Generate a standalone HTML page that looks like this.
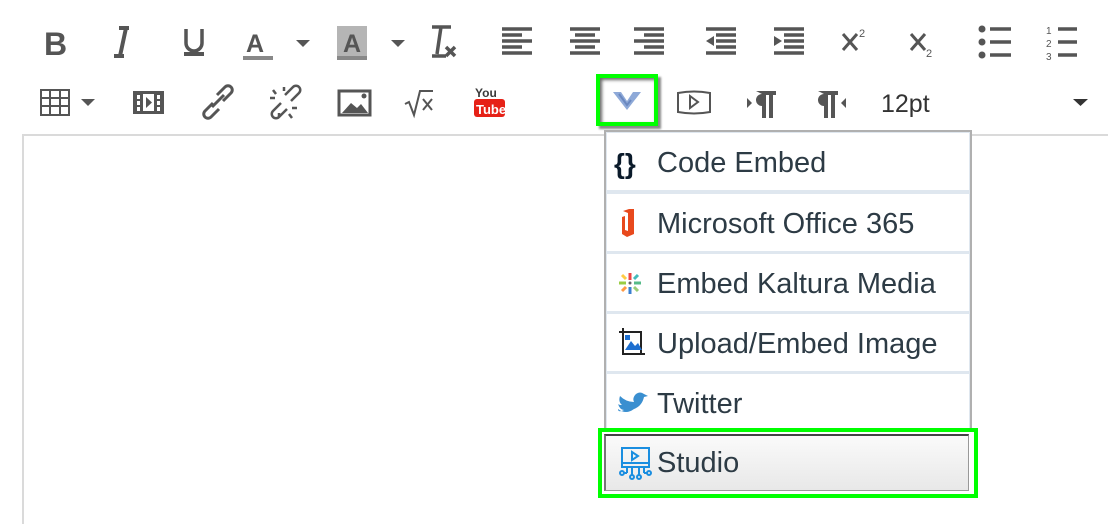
<!DOCTYPE html>
<html><head><meta charset="utf-8"><style>
body{margin:0;width:1108px;height:524px;background:#fff;position:relative;overflow:hidden;font-family:"Liberation Sans",sans-serif}
.a{position:absolute}
svg.a{overflow:visible}
.item{position:absolute;left:607px;width:362px;height:57px;background:#fff;font-size:29px;color:#2d3b45;line-height:57px}
.item span{position:absolute;left:50px;top:2px}
</style></head><body>
<div class="a" style="left:22px;top:134px;width:1086px;height:2px;background:#dadada"></div>
<div class="a" style="left:22px;top:134px;width:2px;height:390px;background:#dadada"></div>

<svg class="a" style="left:0;top:0" width="1108" height="130" fill="#555" stroke="none">
<text x="44" y="55" font-size="32" font-weight="bold" font-family="Liberation Sans">B</text>
<path d="M119 28h10M114 56h10M126 28l-6 28" stroke="#555" stroke-width="4" fill="none"/>
<path d="M186 29v14a8 8 0 0 0 16 0v-14" stroke="#555" stroke-width="3.5" fill="none"/><rect x="184" y="52" width="20" height="4"/>
<text x="246" y="52" font-size="25" font-weight="bold" font-family="Liberation Sans">A</text><rect x="243" y="56" width="30" height="4" fill="#888"/>
<path d="M296 40h14l-7 7z"/>
<rect x="337" y="26" width="30" height="30" fill="#b5b5b5"/><text x="343" y="52" font-size="25" font-weight="bold" font-family="Liberation Sans">A</text><rect x="337" y="56" width="30" height="4" fill="#888"/>
<path d="M391 40h14l-7 7z"/>
<path d="M432 27h19M441 27l-4 27M432 56h14M446 47l9 9M455 47l-9 9" stroke="#555" stroke-width="3.5" fill="none"/>
<g stroke="#555" stroke-width="3.5"><path d="M502 29h30M502 35h20M502 41h30M502 47h20M502 53h30"/>
<path d="M570 29h30M575 35h20M570 41h30M575 47h20M570 53h30"/>
<path d="M634 29h30M644 35h20M634 41h30M644 47h20M634 53h30"/>
<path d="M706 29h30M716 35h20M716 41h20M716 47h20M706 53h30"/>
<path d="M774 29h30M784 35h20M784 41h20M784 47h20M774 53h30"/>
<path d="M990 29h21M990 42h21M990 55h21"/><path d="M1058 29h19M1058 42h19M1058 55h19"/></g>
<path d="M706 41l8-5v10z"/><path d="M782 41l-8-5v10z"/>
<path d="M843 34l14 16M857 34l-14 16M911 34l14 16M925 34l-14 16" stroke="#555" stroke-width="3" fill="none"/>
<text x="859" y="37" font-size="11" font-family="Liberation Sans">2</text><text x="926" y="57" font-size="11" font-family="Liberation Sans">2</text>
<circle cx="982" cy="29" r="3.5"/><circle cx="982" cy="42" r="3.5"/><circle cx="982" cy="55" r="3.5"/>
<text x="1046" y="34" font-size="10">1</text><text x="1046" y="47" font-size="10">2</text><text x="1046" y="60" font-size="10">3</text>
<g stroke="#555" stroke-width="2" fill="none"><rect x="41" y="90" width="28" height="25"/><path d="M41 98h28M41 106h28M50 90v25M60 90v25"/></g>
<path d="M81 99h14l-7 7z"/>
<rect x="133" y="91" width="31" height="23"/><rect x="137" y="95" width="3" height="4" fill="#fff"/><rect x="137" y="101" width="3" height="4" fill="#fff"/><rect x="137" y="107" width="3" height="4" fill="#fff"/><rect x="157" y="95" width="3" height="4" fill="#fff"/><rect x="157" y="101" width="3" height="4" fill="#fff"/><rect x="157" y="107" width="3" height="4" fill="#fff"/><rect x="143" y="94" width="11" height="17" fill="#fff"/><path d="M146 97l6 5.5-6 5.5z"/>
<g stroke="#555" stroke-width="3" fill="none"><path d="M213 103l-8 8a4 4 0 0 0 6 6l8-8M223 101l8-8a4 4 0 0 0-6-6l-8 8M212 107l12-12"/>
<path d="M281 103l-8 8a4 4 0 0 0 6 6l8-8M291 101l8-8a4 4 0 0 0-6-6l-8 8M273 90l3 4M289 114l3 4M270 98h5M292 108h5M284 87v4M279 113v4" stroke-width="2.5"/>
<rect x="339" y="91" width="31" height="24"/></g>
<path d="M342 113l9-10 6 5 4-4 7 9z"/><circle cx="364" cy="96" r="2.5"/>
<path d="M405 104l4-2 5 13 6-24h13" stroke="#555" stroke-width="2" fill="none"/><path d="M423 99l9 11M432 99l-9 11" stroke="#555" stroke-width="2"/>
<text x="475" y="97" font-size="12" font-weight="bold" fill="#3a3a3a">You</text><rect x="474" y="99" width="31" height="18" rx="3" fill="#e62117"/><text x="476" y="114" font-size="13" font-weight="bold" fill="#fff">Tube</text>
<path d="M678 93q16-3 32 0v19q-16 3-32 0z" stroke="#555" stroke-width="2" fill="none"/><path d="M690 96l8 6-8 6z" stroke="#555" stroke-width="2" fill="none"/>
<path d="M756 91h20v4h-3v23h-4v-23h-3v23h-4v-12a6 6 0 0 1 0-12z"/><path d="M747 98l5 5-5 5z"/>
<path d="M818 91h20v4h-3v23h-4v-23h-3v23h-4v-12a6 6 0 0 1 0-12z"/><path d="M846 98l-5 5 5 5z"/>
<text x="881" y="112" font-size="25" fill="#333">12pt</text>
<path d="M1073 99h15l-7.5 7z" fill="#333"/>
</svg>

<div class="a" style="left:596px;top:74px;width:54px;height:44px;border:4px solid #00ff00;box-shadow:2px 2px 3px #666 inset,3px 3px 2px #888"></div>
<svg class="a" style="left:612px;top:90px" width="30" height="24"><path d="M1 2h8l6 9 6-9h8l-14 18z" fill="#8ea9d8"/><path d="M7 4l8 11 4-5" stroke="#6a88c0" stroke-width="2" fill="none"/></svg>

<div class="a" style="left:604px;top:130px;width:364px;height:366px;border:2px solid #b0b0b0;border-bottom:none;background:#dfe7ef"></div>
<div class="item" style="top:133px"><span>Code Embed</span></div>
<div class="item" style="top:194px"><span>Microsoft Office 365</span></div>
<div class="item" style="top:254px"><span>Embed Kaltura Media</span></div>
<div class="item" style="top:314px"><span>Upload/Embed Image</span></div>
<div class="item" style="top:374px;height:60px"><span>Twitter</span></div>
<svg class="a" style="left:614px;top:140px" width="40" height="290">
<text x="0" y="33" font-size="28" font-weight="bold" fill="#0a1a2a" font-family="Liberation Sans">{}</text>
<path d="M9 71l6-2h5v25l-7 3-5-3v-17l3-1v14l3 1v-18z" fill="#e8491d"/>
<g stroke-width="3" transform="translate(0,6)"><path d="M16 127v7" stroke="#e44"/><path d="M16 141v7" stroke="#3a7fd0"/><path d="M5 137h7" stroke="#9c4"/><path d="M20 137h7" stroke="#5b8"/><path d="M8 129l4 4" stroke="#fc4"/><path d="M24 129l-4 4" stroke="#4bb"/><path d="M8 145l4-4" stroke="#f94"/><path d="M24 145l-4-4" stroke="#9c7"/><circle cx="16" cy="137" r="1.5" fill="#666" stroke="none"/></g>
<g transform="translate(0,3)"><path d="M5 189h22v22M9 185v26h22" stroke="#222" stroke-width="2" fill="none"/><path d="M11 207l6-9 4 5 3-3 4 7z" fill="#1d6fd0"/><rect x="11" y="192" width="5" height="5" fill="#1d6fd0"/></g>
<path d="M4 269q8 6 16 0q8-3 10-12l4-1-4-2q-4-3-8 0q-4 4-2 8q-8 0-14-6q-2 6 2 9q-3 0-4-1q2 6 6 6q-6 3-6-1z" fill="#3a8fd0"/>
</svg>

<div class="a" style="left:598px;top:428px;width:372px;height:62px;border:4px solid #00ff00;background:#fff"></div>
<div class="a" style="left:604px;top:434px;width:362px;height:54px;border:1px solid #999;border-top:2px solid #444;border-left:2px solid #777;background:linear-gradient(#fafafa,#e8e8e8);font-size:29px;color:#2d3b45;line-height:54px"><span style="position:absolute;left:51px">Studio</span>
<svg class="a" style="left:13px;top:11px" width="34" height="34" fill="none" stroke="#1a8ee0" stroke-width="2"><rect x="3" y="1" width="27" height="19"/><path d="M3 16h27M13 5l6 4-6 4z"/><path d="M8 20v6M13 20v9M20 20v9M25 20v6M8 26h-4M25 26h4"/><circle cx="3" cy="26" r="2"/><circle cx="13" cy="30" r="2"/><circle cx="20" cy="30" r="2"/><circle cx="30" cy="26" r="2"/></svg></div>
</body></html>
